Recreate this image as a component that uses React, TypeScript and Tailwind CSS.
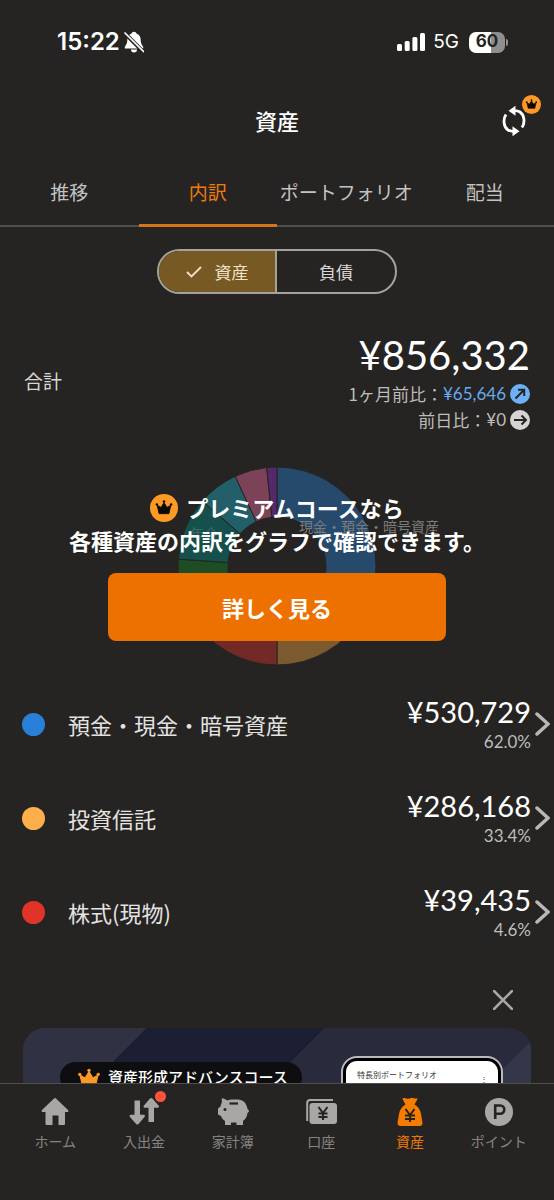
import React from 'react';

const tabs = ['推移', '内訳', 'ポートフォリオ', '配当'];

const assets = [
  { name: '預金・現金・暗号資産', amount: '¥530,729', rate: '62.0%', dot: 'bg-[#2980d9]' },
  { name: '投資信託', amount: '¥286,168', rate: '33.4%', dot: 'bg-[#ffae4c]' },
  { name: '株式(現物)', amount: '¥39,435', rate: '4.6%', dot: 'bg-[#df3427]' },
];

// Start and end are degrees, clockwise from twelve o'clock
const slices = [
  { start: 0, end: 120, color: '#264a6c' },
  { start: 120, end: 180, color: '#7c5a30' },
  { start: 180, end: 240, color: '#732a26' },
  { start: 240, end: 274, color: '#1e4d25' },
  { start: 274, end: 311, color: '#15504c' },
  { start: 311, end: 335, color: '#235f69' },
  { start: 335, end: 354, color: '#7c4358' },
  { start: 354, end: 360, color: '#54296a' },
];

const point = (angle: number, radius: number) => {
  const rad = ((angle - 90) * Math.PI) / 180;
  return `${(99 + radius * Math.cos(rad)).toFixed(2)} ${(99 + radius * Math.sin(rad)).toFixed(2)}`;
};

const slicePath = (start: number, end: number) =>
  `M${point(start, 99)}A99 99 0 0 1 ${point(end, 99)}L${point(end, 49)}A49 49 0 0 0 ${point(start, 49)}Z`;

const Crown: React.FC = () => (
  <>
    <path
      d="M5 21 2.200 9 7.800 12 12 5 16.200 12 21.800 9 19 21Z"
      stroke="currentColor"
      strokeWidth="1.200"
      strokeLinejoin="round"
    />
    <circle cx="1.900" cy="8" r="1.800" />
    <circle cx="12" cy="3.600" r="1.800" />
    <circle cx="22.100" cy="8" r="1.800" />
  </>
);

const CrownBadge: React.FC<{ className: string }> = ({ className }) => (
  <svg viewBox="0 0 28 28" className={`text-[#0c0a08] ${className}`} aria-hidden="true">
    <circle cx="14" cy="14" r="14" fill="#ff9926" />
    <g transform="translate(5.600 5) scale(.7)" fill="currentColor">
      <Crown />
    </g>
  </svg>
);

const StatusBar: React.FC = () => (
  <div className="flex h-[84px] items-center justify-between pr-[46px] pl-[57px] font-['Inter',sans-serif] text-white">
    <div className="flex items-center gap-1">
      <span className="text-2xl font-semibold">15:22</span>
      <svg viewBox="0 0 20 22" className="h-[22px] w-5" aria-hidden="true">
        <path
          fill="#fff"
          d="M10 .8C8.700.8 7.800 1.600 7.600 2.500 4.700 3.500 3.300 5.900 3.300 8.700 3.300 13 1.600 14 .8 16v1.500h18.400V16c-.8-2-2.500-3-2.500-7.300 0-2.800-1.400-5.200-4.300-6.200C12.200 1.600 11.300.8 10 .8ZM7 18.500a3 3 0 0 0 6 0Z"
        />
        <path d="M0 1.500 20 21.500" stroke="#252422" strokeWidth="4" />
        <path d="M1 2 19.500 20.500" stroke="#fff" strokeWidth="1.700" strokeLinecap="round" />
      </svg>
    </div>
    <div className="flex items-center">
      <svg viewBox="0 0 28 18" className="h-[18px] w-7" fill="#fff" aria-hidden="true">
        <rect x="0" y="11" width="5" height="7" rx="1.500" />
        <rect x="7.700" y="8" width="5" height="10" rx="1.500" />
        <rect x="15.400" y="4" width="5" height="14" rx="1.500" />
        <rect x="23" y="0" width="5" height="18" rx="1.500" />
      </svg>
      <span className="ml-2 text-[19px]">5G</span>
      <div className="ml-[10px] flex h-[21px] w-9 items-center justify-center rounded-[7px] bg-linear-to-r from-white from-60% to-[#8f8f8e] to-60% text-[17px] font-bold text-[#252422]">
        60
      </div>
      <div className="ml-px h-[7px] w-[2px] rounded-r-full bg-[#8f8f8e]" />
    </div>
  </div>
);

const Header: React.FC = () => (
  <header className="grid h-[73px] grid-cols-[1fr_auto_1fr] items-center px-6">
    <h1 className="col-start-2 text-[22px] font-medium text-white">資産</h1>
    <button aria-label="更新" className="relative justify-self-end">
      <svg viewBox="0 0 32 32" className="size-8" aria-hidden="true">
        <path
          d="M8 9.500C4.800 14 5.500 22 10 25Q12.500 26.500 16 26.300M24 22.500C27.200 18 26.500 10 22 7Q19.500 5.500 16 5.700"
          fill="none"
          stroke="#fff"
          strokeWidth="2.800"
        />
        <path d="M17.500.8v10L10.500 5.800ZM14.500 21.200v10l7-5Z" fill="#fff" />
      </svg>
      <CrownBadge className="absolute -top-[10px] -right-[11px] size-[19px]" />
    </button>
  </header>
);

const Tabs: React.FC = () => (
  <nav className="grid grid-cols-4 border-b-2 border-[#504f4d]">
    {tabs.map((tab) => (
      <button
        key={tab}
        className={
          tab === '内訳'
            ? '-mb-[2px] h-[70px] border-b-[3px] border-[#d9731a] pt-[3px] text-[19px] whitespace-nowrap text-[#ef7a0c]'
            : 'h-[68px] pt-[2px] text-[19px] whitespace-nowrap text-[#c4c3c1]'
        }
      >
        {tab}
      </button>
    ))}
  </nav>
);

const Toggle: React.FC = () => (
  <div className="mx-auto mt-[22px] grid h-[45px] w-60 grid-cols-2 overflow-hidden rounded-full border-2 border-[#a5a19b] text-[17px]">
    <button className="flex items-center justify-center gap-[13px] border-r-2 border-[#a5a19b] bg-[#775924] text-[#f0e2c8]">
      <svg viewBox="0 0 16 12" className="h-3 w-4" fill="none" stroke="currentColor" strokeWidth="1.800" aria-hidden="true">
        <path d="m1 6 4.500 4.500L15 1" />
      </svg>
      資産
    </button>
    <button className="text-[#d8d7d5]">負債</button>
  </div>
);

const TrendIcon: React.FC<{ up?: boolean }> = ({ up }) => (
  <svg viewBox="0 0 20 20" className="size-5" aria-hidden="true">
    <circle cx="10" cy="10" r="10" fill={up ? '#6db0f8' : '#d5d4d3'} />
    <path
      d={up ? 'M5.500 14.500 14 6M8 5.800h6.200V12' : 'M4 10h12M11.500 5.500 16 10l-4.500 4.500'}
      fill="none"
      stroke="#252422"
      strokeWidth="2"
    />
  </svg>
);

const Total: React.FC = () => (
  <section className="mt-[35px] flex items-center justify-between px-6">
    <h2 className="text-[19px] text-[#d8d7d5]">合計</h2>
    <div className="text-right text-[17px] text-[#bebdbb]">
      <p className="font-['Lato',sans-serif] text-[40px] leading-[52px] text-white">¥856,332</p>
      <p className="flex h-[26px] items-center justify-end">
        <span>1ヶ月前比：</span>
        <span className="mr-1 font-['Lato',sans-serif] text-[#67aaf0]">¥65,646</span>
        <TrendIcon up />
      </p>
      <p className="flex h-[26px] items-center justify-end">
        <span>前日比：</span>
        <span className="mr-1 font-['Lato',sans-serif]">¥0</span>
        <TrendIcon />
      </p>
    </div>
  </section>
);

const Breakdown: React.FC = () => (
  <section className="mt-[34px] grid justify-items-center">
    <svg viewBox="0 0 198 198" className="col-start-1 row-start-1 size-[198px] overflow-visible" aria-hidden="true">
      {slices.map((slice) => (
        <path key={slice.start} d={slicePath(slice.start, slice.end)} fill={slice.color} stroke="#252422" />
      ))}
      <text x="121" y="65" fontSize="14" fill="#7c7b7a">
        現金・預金・暗号資産
      </text>
      <text x="12" y="72" fontSize="14" fill="#3f6a66">
        年金
      </text>
    </svg>
    <div className="relative col-start-1 row-start-1 flex w-full flex-col items-center self-center px-5 text-[22px] font-bold text-white">
      <p className="text-center leading-[33px]">
        <span className="flex items-center justify-center gap-2">
          <CrownBadge className="size-7" />
          プレミアムコースなら
        </span>
        各種資産の内訳をグラフで確認できます。
      </p>
      <button className="mt-4 h-[68px] w-full max-w-[338px] rounded-lg bg-[#ec7100]">詳しく見る</button>
    </div>
  </section>
);

const AssetList: React.FC = () => (
  <ul className="mt-3">
    {assets.map((asset) => (
      <li key={asset.name}>
        <button className="flex h-[94px] w-full items-center pr-1 pl-[22px] text-left">
          <span className={`size-[23px] rounded-full ${asset.dot}`} />
          <span className="ml-[23px] flex-1 text-[22px] text-[#e4e3e1]">{asset.name}</span>
          <span className="flex flex-col text-right font-['Lato',sans-serif]">
            <span className="text-[29px] leading-9 text-white">{asset.amount}</span>
            <span className="text-[17px] leading-6 text-[#bebdbb]">{asset.rate}</span>
          </span>
          <svg viewBox="0 0 15 26" className="ml-1 h-[26px] w-[15px]" fill="none" stroke="#b9b8b6" strokeWidth="3.500" aria-hidden="true">
            <path d="m2 3 11 10L2 23" strokeLinecap="round" />
          </svg>
        </button>
      </li>
    ))}
  </ul>
);

const Banner: React.FC = () => (
  <aside className="mt-[31px] px-[23px]">
    <button aria-label="閉じる" className="mr-[18px] ml-auto block">
      <svg viewBox="0 0 20 20" className="size-5" stroke="#a9a8a6" strokeWidth="2.500" strokeLinecap="round" aria-hidden="true">
        <path d="m1 1 18 18M19 1 1 19" />
      </svg>
    </button>
    <div className="mt-[18px] flex h-[150px] items-start justify-between overflow-hidden rounded-[22px] bg-[linear-gradient(135deg,#303142_87px,#1c1f33_87px,#1c1f33_213px,#292b3d_213px,#292b3d_369px,#343649_369px)] pr-7 pl-[37px]">
      <div className="mt-[34px] flex h-[31px] items-center gap-2 rounded-full bg-[#0e0e10] pr-[14px] pl-[18px] text-[15px] font-medium whitespace-nowrap text-white">
        <svg viewBox="0 0 24 24" className="size-[22px] text-[#ff9926]" fill="currentColor" aria-hidden="true">
          <Crown />
        </svg>
        資産形成アドバンスコース
      </div>
      <div className="mt-7 h-40 w-[162px] rounded-[16px] border-2 border-[#b9b9c0] bg-black p-[3px]">
        <div className="flex h-full justify-between rounded-[11px] bg-white pt-2 pr-[10px] pl-[11px] text-[8px] text-[#333]">
          <span>特長別ポートフォリオ</span>
          <span className="pt-1">⋮</span>
        </div>
      </div>
    </div>
  </aside>
);

const navItems = [
  {
    label: 'ホーム',
    icon: <path d="M14 1.600q1-1 2 0L28 13q1.200 2-1 2h-2v12q0 1-1 1h-5.500v-9.500h-6V28H6.500q-1 0-1-1V15H3q-2.200 0-1-2Z" />,
  },
  {
    label: '入出金',
    icon: (
      <path d="M5.500 3.500H11v14.300h4q1.700.5.700 2l-6.200 7.200q-1.200 1.200-2.400 0L.8 19.800q-1-1.500.7-2h4ZM19.500 25V10.700h-4q-1.700-.5-.7-2l6.200-7.200q1.200-1.200 2.400 0l6.300 7.200q1 1.500-.7 2h-4V25Z" />
    ),
  },
  {
    label: '家計簿',
    icon: (
      <>
        <path d="M3.800 1.500q.8-.5 1.700 0L9.500 3.500Q11 2.500 14 2.500h6c5 0 8.500 3.500 9.500 9.500q1.500 1 1.500 2t-1.500 2c-.5 4-2 6-4.500 8v4h-6.500v-2.500H13V28H7v-4c-2-1.500-3-2.500-4-5l-3-1.500v-6L2.500 9.500q.3-2 1.300-4Z" />
        <path d="M11.500 6.500h8.500" stroke="#252422" strokeWidth="2.200" />
        <circle cx="7" cy="12.500" r="1.500" fill="#252422" />
      </>
    ),
  },
  {
    label: '口座',
    icon: (
      <>
        <path d="M1.200 24V6q0-3 3-3H27" fill="none" stroke="currentColor" strokeWidth="2" />
        <rect x="3.500" y="6" width="27.500" height="21" rx="3" />
        <path d="m12.500 10 4.500 6 4.500-6M17 16v7m-4.500-6.500h9m-9 3.500h9" fill="none" stroke="#252422" strokeWidth="2" />
      </>
    ),
  },
  {
    label: '資産',
    icon: (
      <>
        <path d="M7.200 1.500Q9 .5 11 1.200q2 1 4 0 2-1 4 0 2 .5 3.800.3L19.500 7.500Q25 10.500 26 17l1.500 9q0 3-3 3h-19q-3 0-3-3L4 17q1-6.500 6.500-9.500Z" />
        <path d="m10.500 12 4.500 6 4.500-6M15 18v7m-5-6.500h10m-10 3.500h10" fill="none" stroke="#252422" strokeWidth="2" />
      </>
    ),
  },
  {
    label: 'ポイント',
    icon: (
      <>
        <circle cx="15" cy="15" r="14" />
        <path d="M11.200 22V8.500h5a4 4 0 0 1 0 8.200h-5" fill="none" stroke="#252422" strokeWidth="2.600" />
      </>
    ),
  },
];

const BottomNav: React.FC = () => (
  <nav className="grid h-[117px] shrink-0 grid-cols-6 items-start border-t border-[#504f4d] px-[11px] pt-[13px]">
    {navItems.map(({ label, icon }) => (
      <a
        key={label}
        href="#"
        className={`flex flex-col items-center gap-1 text-sm whitespace-nowrap ${label === '資産' ? 'text-[#ef7a0c]' : 'text-[#858482]'}`}
      >
        <span className="relative">
          <svg
            viewBox="0 0 30 30"
            className={`size-[30px] overflow-visible ${label === '資産' ? 'text-[#f57c00]' : 'text-[#a8a7a5]'}`}
            fill="currentColor"
            aria-hidden="true"
          >
            {icon}
          </svg>
          {label === '入出金' && <span className="absolute -top-[6px] -right-[7px] size-[11px] rounded-full bg-[#ff513d]" />}
        </span>
        {label}
      </a>
    ))}
  </nav>
);

const App: React.FC = () => (
  <div className="flex h-screen flex-col bg-[#252422] font-['Noto_Sans_CJK_JP',sans-serif]">
    <main className="min-h-0 flex-1 overflow-y-auto [scrollbar-width:none]">
      <StatusBar />
      <Header />
      <Tabs />
      <Toggle />
      <Total />
      <Breakdown />
      <AssetList />
      <Banner />
    </main>
    <BottomNav />
  </div>
);

export default App;
